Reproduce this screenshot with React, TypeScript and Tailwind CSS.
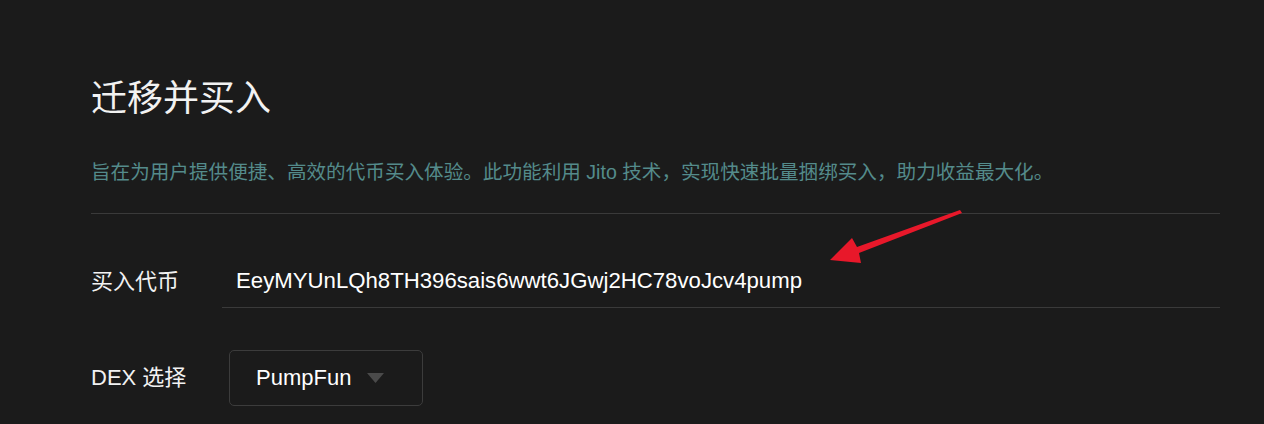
const FONT = "font-['Liberation_Sans','Noto_Sans_CJK_SC',sans-serif]";

const App = () => {
  return (
    <div className={`relative min-h-[424px] w-full bg-[#1b1b1b] text-[#f2f2f2] ${FONT}`}>
      <div className="pl-[91px] pr-[44px] pt-[75px]">
        {/* Header */}
        <h1 className="text-[36px] leading-[48px] font-normal">迁移并买入</h1>
        <p className="mt-[35px] text-[19.6px] leading-[28px] text-[#548b8b]">
          旨在为用户提供便捷、高效的代币买入体验。此功能利用 Jito 技术，实现快速批量捆绑买入，助力收益最大化。
        </p>
        <div className="mt-[27px] h-px bg-[#3a3a3a]" />

        {/* Token input */}
        <div className="mt-[41px] flex items-center">
          <label className="w-[131px] shrink-0 text-[22px] leading-[30px]">买入代币</label>
          <div className="flex h-[53px] flex-1 items-center border-b border-[#3a3a3a] pl-[14px]">
            <span className="text-[22.2px] leading-[30px] text-white">
              EeyMYUnLQh8TH396sais6wwt6JGwj2HC78voJcv4pump
            </span>
          </div>
        </div>

        {/* DEX select */}
        <div className="mt-[42px] flex items-center">
          <label className="w-[138px] shrink-0 text-[22px] leading-[30px]">DEX 选择</label>
          <button className="flex h-[56px] w-[194px] items-center rounded-[5px] border border-[#3c3c3c] bg-[#1b1b1b] pl-[26px] text-left">
            <span className="text-[22px] leading-[30px] text-white">PumpFun</span>
            <svg className="ml-[16px]" width="17" height="10" viewBox="0 0 17 10">
              <polygon points="0,0 17,0 8.5,10" fill="#4a4a4a" />
            </svg>
          </button>
        </div>
      </div>

      {/* Red annotation arrow */}
      <svg className="pointer-events-none absolute left-0 top-0" width="1264" height="424">
        <polygon
          points="830,260 852,238 857,247 960,210 962,213 859,253 861,263"
          fill="#e8182a"
        />
      </svg>
    </div>
  );
};

export default App;
